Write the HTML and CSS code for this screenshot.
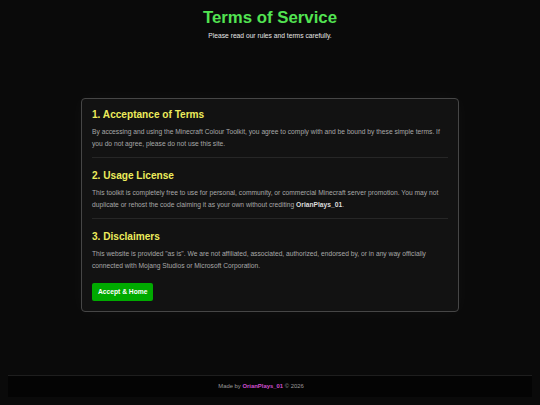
FILE: index.html
```html
<!DOCTYPE html>
<html lang="en">
<head>
<meta charset="utf-8">
<title>Terms of Service</title>
<link rel="stylesheet" href="styles.css">
</head>
<body>
<header class="page-header">
  <h1 class="title">Terms of Service</h1>
  <p class="subtitle">Please read our rules and terms carefully.</p>
</header>
<main class="main">
  <div class="card">
    <section class="section">
      <h2 class="section-title">1. Acceptance of Terms</h2>
      <p class="section-text">By accessing and using the Minecraft Colour Toolkit, you agree to comply with and be bound by these simple terms. If you do not agree, please do not use this site.</p>
    </section>
    <section class="section">
      <h2 class="section-title">2. Usage License</h2>
      <p class="section-text">This toolkit is completely free to use for personal, community, or commercial Minecraft server promotion. You may not duplicate or rehost the code claiming it as your own without crediting <strong class="credit">OrianPlays_01</strong>.</p>
    </section>
    <section class="section section-last">
      <h2 class="section-title">3. Disclaimers</h2>
      <p class="section-text">This website is provided "as is". We are not affiliated, associated, authorized, endorsed by, or in any way officially connected with Mojang Studios or Microsoft Corporation.</p>
    </section>
    <button class="btn" type="button">Accept &amp; Home</button>
  </div>
</main>
<footer class="footer">
  Made by <span class="author">OrianPlays_01</span> © 2026
</footer>
</body>
</html>
```

FILE: styles.css
```css
* { box-sizing: border-box; }
html { background: #0a0a0a; }
body {
  margin: 8px;
  min-height: calc(100vh - 16px);
  display: flex;
  flex-direction: column;
  background: #0a0a0a;
  font-family: "Liberation Sans", Arial, sans-serif;
  color: #aaaaaa;
}
.page-header { text-align: center; }
.title {
  margin: 0;
  font-size: 16.8px;
  line-height: 19px;
  font-weight: bold;
  color: #52e452;
}
.subtitle {
  margin: 5px 0 0;
  font-size: 6.7px;
  line-height: 8px;
  color: #e6e6e6;
}
.main {
  flex: 1;
  display: flex;
  align-items: center;
  justify-content: center;
  padding-bottom: 6px;
}
.card {
  width: 378px;
  background: #121212;
  border: 1px solid #464646;
  border-radius: 4px;
  padding: 10px 10px 10px;
  box-shadow: 0 0 18px rgba(255, 255, 255, 0.03);
}
.section {
  padding-bottom: 7px;
  border-bottom: 1px solid #262626;
  margin-bottom: 12px;
}
.section-last {
  border-bottom: none;
  padding-bottom: 0;
  margin-bottom: 11px;
}
.section-title {
  margin: 0 0 5px;
  font-size: 10.1px;
  line-height: 12px;
  font-weight: bold;
  color: #ecec5c;
}
.section-text {
  margin: 0;
  font-size: 6.7px;
  line-height: 12px;
  color: #a8a8a8;
}
.credit { color: #dddddd; font-weight: bold; }
.btn {
  display: block;
  border: none;
  border-radius: 2px;
  background: #00aa00;
  color: #ffffff;
  font-family: "Liberation Sans", Arial, sans-serif;
  font-weight: bold;
  font-size: 6.7px;
  line-height: 8px;
  padding: 5px 6px;
  margin: 0;
}
.footer {
  border-top: 1px solid #1e1e1e;
  background: #040404;
  padding: 7px 25px 7px 7px;
  text-align: center;
  font-size: 5.9px;
  line-height: 7px;
  color: #9a9a9a;
}
.author { color: #d04fd0; font-weight: bold; }
```
